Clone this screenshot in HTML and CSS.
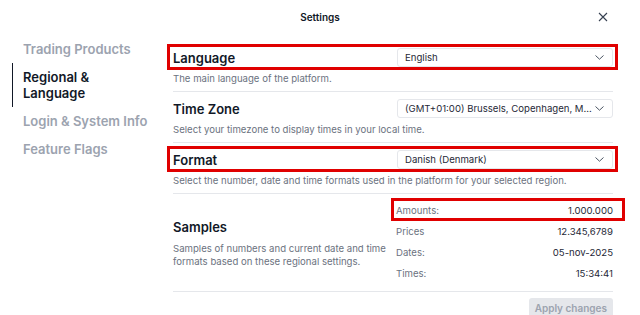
FILE: index.html
```html
<!DOCTYPE html>
<html>
    <head>
        <meta charset="utf-8">
        <title>Settings</title>
        <link rel="stylesheet" href="styles.css">
    </head>
    <body>
        <div class="dialog">
            <header class="head">
                <span class="title">Settings</span>
                <button class="close" aria-label="Close">
                    <svg width="10" height="10" viewBox="0 0 10 10"><path d="M1 1L9 9M9 1L1 9" stroke="#374151" stroke-width="1.1" fill="none"/></svg>
                </button>
            </header>
            <div class="body">
                <!-- left menu -->
                <nav class="side">
                    <a class="item">Trading Products</a>
                    <a class="item active">Regional &amp;<br>Language</a>
                    <a class="item">Login &amp; System Info</a>
                    <a class="item">Feature Flags</a>
                </nav>
                <main class="content">
                    <section class="sect">
                        <div class="row hl">
                            <span class="label">Language</span>
                            <div class="select">
                                <span class="value">English</span>
                                <svg class="chev" width="9" height="5" viewBox="0 0 9 5"><path d="M0.5 0.5L4.5 4.2L8.5 0.5" stroke="#4b5563" stroke-width="1" fill="none"/></svg>
                            </div>
                        </div>
                        <p class="desc">The main language of the platform.</p>
                    </section>
                    <section class="sect">
                        <div class="row">
                            <span class="label">Time Zone</span>
                            <div class="select">
                                <span class="value">(GMT+01:00) Brussels, Copenhagen, M...</span>
                                <svg class="chev" width="9" height="5" viewBox="0 0 9 5"><path d="M0.5 0.5L4.5 4.2L8.5 0.5" stroke="#4b5563" stroke-width="1" fill="none"/></svg>
                            </div>
                        </div>
                        <p class="desc">Select your timezone to display times in your local time.</p>
                    </section>
                    <section class="sect">
                        <div class="row hl">
                            <span class="label">Format</span>
                            <div class="select">
                                <span class="value">Danish (Denmark)</span>
                                <svg class="chev" width="9" height="5" viewBox="0 0 9 5"><path d="M0.5 0.5L4.5 4.2L8.5 0.5" stroke="#4b5563" stroke-width="1" fill="none"/></svg>
                            </div>
                        </div>
                        <p class="desc">Select the number, date and time formats used in the platform for your selected region.</p>
                    </section>
                    <section class="sect samples">
                        <div class="info">
                            <span class="label">Samples</span>
                            <p class="desc">Samples of numbers and current date and time formats based on these regional settings.</p>
                        </div>
                        <div class="list">
                            <div class="pair hl-small"><span>Amounts:</span><span class="num">1.000.000</span></div>
                            <div class="pair"><span>Prices</span><span class="num">12.345,6789</span></div>
                            <div class="pair"><span>Dates:</span><span class="num">05-nov-2025</span></div>
                            <div class="pair"><span>Times:</span><span class="num">15:34:41</span></div>
                        </div>
                    </section>
                    <div class="actions">
                        <button class="apply" disabled>Apply changes</button>
                    </div>
                </main>
            </div>
        </div>
    </body>
</html>
```
FILE: styles.css
```css
html, body{
    margin: 0;
    padding: 0;
    background: #ffffff;
}
body{
    font-family: "Inter", "Liberation Sans", sans-serif;
    color: #111827;
    overflow: hidden;
}
.dialog{
    width: 640px;
    height: 315px;
}
/* top bar */
.head{
    height: 33px;
    display: grid;
    grid-template-columns: 1fr auto 1fr;
    align-items: center;
}
.title{
    grid-column: 2;
    font-size: 10px;
    font-weight: 600;
    color: #111827;
}
.close{
    grid-column: 3;
    justify-self: end;
    margin-right: 32px;
    width: 10px;
    height: 10px;
    padding: 0;
    border: 0;
    background: none;
    display: flex;
}
.body{
    display: flex;
}
/* left menu */
.side{
    width: 161px;
    padding: 2px 0 0 12px;
    display: flex;
    flex-direction: column;
}
.item{
    display: block;
    padding: 6px 0 6px 10px;
    border-left: 1px solid transparent;
    font-size: 13px;
    line-height: 16px;
    font-weight: 600;
    color: #9ca3af;
}
.item.active{
    color: #111827;
    border-left-color: #111827;
}
/* settings column */
.content{
    width: 440px;
    padding-top: 8px;
}
.sect{
    padding: 6px 0 6px;
    border-bottom: 1px solid #e5e7eb;
}
.row{
    position: relative;
    height: 21px;
    display: flex;
    align-items: center;
    justify-content: space-between;
}
.label{
    font-size: 13px;
    font-weight: 600;
    color: #111827;
}
.select{
    width: 216px;
    height: 19px;
    box-sizing: border-box;
    border: 1px solid #e5e7eb;
    border-radius: 3px;
    padding: 0 8px 0 7px;
    display: flex;
    align-items: center;
    gap: 4px;
}
.value{
    flex: 1;
    min-width: 0;
    font-size: 9.6px;
    color: #1f2937;
    white-space: nowrap;
}
.chev{
    flex: none;
}
.desc{
    margin: 5px 0 0;
    font-size: 9.6px;
    line-height: 12px;
    color: #6b7280;
}
/* red marking boxes */
.hl::after{
    content: "";
    position: absolute;
    top: -3px;
    bottom: -2px;
    left: -6px;
    right: -5px;
    border: 3px solid #e00000;
    pointer-events: none;
}
.samples{
    display: grid;
    grid-template-columns: 1fr 217px;
    column-gap: 7px;
    align-items: center;
    padding: 6px 0 8px;
}
.samples .desc{
    margin-top: 6px;
    line-height: 13px;
}
.list{
    display: flex;
    flex-direction: column;
    gap: 1px;
}
.pair{
    position: relative;
    height: 20px;
    display: flex;
    align-items: center;
    justify-content: space-between;
    font-size: 9.6px;
    color: #6b7280;
}
.num{
    color: #1f2937;
}
.hl-small::after{
    content: "";
    position: absolute;
    top: -2px;
    bottom: -1px;
    left: -5px;
    right: -12px;
    border: 3px solid #e00000;
    pointer-events: none;
}
.actions{
    display: flex;
    justify-content: flex-end;
    padding-top: 6px;
}
.apply{
    height: 20px;
    padding: 0 6px;
    border: 0;
    border-radius: 3px;
    background: #e5e7eb;
    color: #9ca3af;
    font-family: inherit;
    font-size: 10px;
    font-weight: 600;
}
```
